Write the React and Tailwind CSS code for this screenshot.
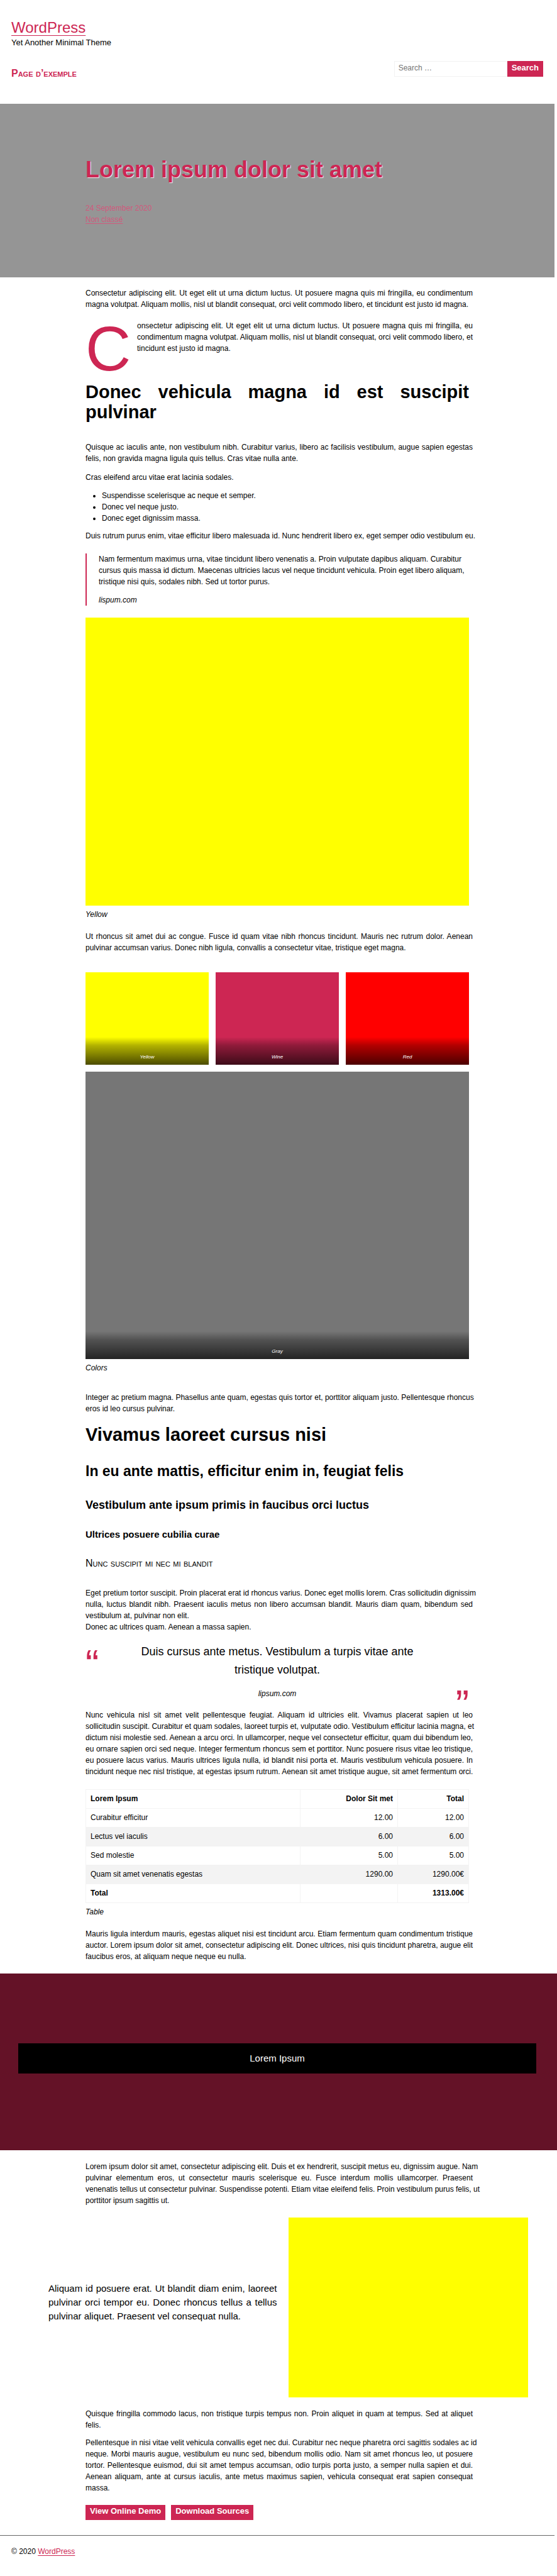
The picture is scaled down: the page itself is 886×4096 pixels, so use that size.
// Prose runs slightly past the figure column on the right.
const Para = ({ className = "", children }) => (
  <p className={`-mr-1.5 text-justify ${className}`}>{children}</p>
);

// Paragraph with fixed line breaks; every line but the last fills the column.
const Verse = ({ className = "", lines }) => (
  <p className={`-mr-1.5 ${className}`}>
    {lines.map((line) => (
      <span
        key={line}
        className="block text-justify whitespace-nowrap [text-align-last:justify] last:[text-align-last:left]"
      >
        {line}{" "}
      </span>
    ))}
  </p>
);

const Swatch = ({ color, label, className = "" }) => (
  <figure className={`flex aspect-4/3 flex-col justify-end ${color} ${className}`}>
    <figcaption className="h-11 bg-[linear-gradient(0deg,rgba(0,0,0,.7)_0%,rgba(0,0,0,.3)_70%,transparent_100%)] pt-[26px] text-center text-[8px] leading-3 text-white italic">
      {label}
    </figcaption>
  </figure>
);

const rows = [
  ["Curabitur efficitur", "12.00", "12.00"],
  ["Lectus vel iaculis", "6.00", "6.00"],
  ["Sed molestie", "5.00", "5.00"],
  ["Quam sit amet venenatis egestas", "1290.00", "1290.00€"],
];

const cell = "border border-[#f3f3f3] px-[7px] pt-[5px] pb-[6px]";
const button = "bg-[#cd2653] px-[7px] pt-0.5 pb-1.5 text-[13px] leading-4 font-bold text-white";

function Header() {
  return (
    <header className="px-[18px] pt-7">
      <div>
        <a href="#" className="text-[24px] leading-8 text-[#cd2653] underline decoration-1 underline-offset-4">
          WordPress
        </a>
      </div>
      <p className="text-[13px] leading-4">Yet Another Minimal Theme</p>
      <div className="mt-[21px] flex items-start justify-between">
        <nav className="pt-[11px]">
          <a href="#" className="block text-[16px] leading-[18px] font-bold text-[#cd2653] [font-variant:small-caps]">
            Page d’exemple
          </a>
        </nav>
        <form className="flex" onSubmit={(e) => e.preventDefault()}>
          <input
            type="search"
            aria-label="Search"
            placeholder="Search …"
            className="w-[180px] border border-[#f2f2f2] px-1.5 pb-0.5 text-[12px] leading-[21px] placeholder:text-[#757575]"
          />
          <button type="submit" className={button}>
            Search
          </button>
        </form>
      </div>
    </header>
  );
}

function Quote() {
  return (
    <figure className="mt-4 flex justify-between text-center">
      <span aria-hidden="true" className="w-6 text-left text-[64px] leading-[70px] text-[#cd2653]">
        “
      </span>
      <blockquote className="w-[450px]">
        <p className="text-[18px] leading-[29px]">
          Duis cursus ante metus. Vestibulum a turpis vitae ante tristique volutpat.
        </p>
        <cite className="mt-3.5 block">lipsum.com</cite>
      </blockquote>
      <span aria-hidden="true" className="-mb-3.5 flex w-6 justify-end self-end text-[64px] leading-[10px] text-[#cd2653]">
        ”
      </span>
    </figure>
  );
}

function PriceTable() {
  return (
    <figure className="mt-[19px]">
      <table className="w-full border-collapse text-right">
        <thead>
          <tr>
            <th className={`${cell} w-[341px] text-left`}>Lorem Ipsum</th>
            <th className={cell}>Dolor Sit met</th>
            <th className={`${cell} w-[113px]`}>Total</th>
          </tr>
        </thead>
        <tbody>
          {rows.map(([name, price, total]) => (
            <tr key={name} className="even:bg-[#f3f3f3]">
              <td className={`${cell} text-left`}>{name}</td>
              <td className={cell}>{price}</td>
              <td className={cell}>{total}</td>
            </tr>
          ))}
        </tbody>
        <tfoot>
          <tr className="font-bold">
            <td className={`${cell} text-left`}>Total</td>
            <td className={cell}></td>
            <td className={cell}>1313.00€</td>
          </tr>
        </tfoot>
      </table>
      <figcaption className="mt-[5px] italic">Table</figcaption>
    </figure>
  );
}

export default function App() {
  return (
    <div className="bg-white font-['Liberation_Sans',Arial,sans-serif] text-[12px] leading-[18px] text-black">
      <div className="mr-1">
        <Header />
        <div className="mt-[39px] bg-[#959595] py-20 text-[#cd2653]">
          <div className="mx-auto w-[610px]">
            <h1 className="text-[36px] leading-[50px] font-bold text-shadow-[1px_1px_1px_#f2f2f2]">
              Lorem ipsum dolor sit amet
            </h1>
            <div className="mt-[27px] pb-[3px] text-[#d05a7d]">
              <p>24 September 2020</p>
              <a href="#" className="underline underline-offset-2">
                Non classé
              </a>
            </div>
          </div>
        </div>

        <main className="mx-auto w-[610px] pt-4">
          <Para>
            Consectetur adipiscing elit. Ut eget elit ut urna dictum luctus. Ut posuere magna quis mi fringilla, eu
            condimentum magna volutpat. Aliquam mollis, nisl ut blandit consequat, orci velit commodo libero, et
            tincidunt est justo id magna.
          </Para>
          <div className="mt-4 flex pb-[13px]">
            <span className="w-[82px] pt-[5px] text-[100px] leading-[80px] text-[#cd2653]">C</span>
            <Verse
              className="min-w-0 flex-1"
              lines={[
                "onsectetur adipiscing elit. Ut eget elit ut urna dictum luctus. Ut posuere magna quis mi fringilla, eu",
                "condimentum magna volutpat. Aliquam mollis, nisl ut blandit consequat, orci velit commodo libero, et",
                "tincidunt est justo id magna.",
              ]}
            />
          </div>
          <h2 className="text-justify text-[29px] leading-8 font-bold">Donec vehicula magna id est suscipit pulvinar</h2>
          <Para className="mt-[31px]">
            Quisque ac iaculis ante, non vestibulum nibh. Curabitur varius, libero ac facilisis vestibulum, augue
            sapien egestas felis, non gravida magna ligula quis tellus. Cras vitae nulla ante.
          </Para>
          <Para className="mt-3">Cras eleifend arcu vitae erat lacinia sodales.</Para>
          <ul className="mt-[11px] list-disc pl-[26px]">
            <li>Suspendisse scelerisque ac neque et semper.</li>
            <li>Donec vel neque justo.</li>
            <li>Donec eget dignissim massa.</li>
          </ul>
          <Verse
            className="mt-2.5"
            lines={[
              "Duis rutrum purus enim, vitae efficitur libero malesuada id. Nunc hendrerit libero ex, eget semper odio vestibulum eu.",
            ]}
          />
          <blockquote className="mt-[19px] border-l-2 border-[#cd2653] pr-[18px] pl-[19px]">
            <Verse
              lines={[
                "Nam fermentum maximus urna, vitae tincidunt libero venenatis a. Proin vulputate dapibus aliquam. Curabitur",
                "cursus quis massa id dictum. Maecenas ultricies lacus vel neque tincidunt vehicula. Proin eget libero aliquam,",
                "tristique nisi quis, sodales nibh. Sed ut tortor purus.",
              ]}
            />
            <cite className="mt-[11px] block">lispum.com</cite>
          </blockquote>
          <figure className="mt-[19px]">
            <div className="aspect-4/3 bg-[#ffff00]" />
            <figcaption className="mt-[5px] italic">Yellow</figcaption>
          </figure>
          <Para className="mt-[17px]">
            Ut rhoncus sit amet dui ac congue. Fusce id quam vitae nibh rhoncus tincidunt. Mauris nec rutrum dolor.
            Aenean pulvinar accumsan varius. Donec nibh ligula, convallis a consectetur vitae, tristique eget magna.
          </Para>
          <figure className="mt-[30px]">
            <div className="grid grid-cols-3 gap-[11px]">
              <Swatch color="bg-[#ffff00]" label="Yellow" />
              <Swatch color="bg-[#cd2653]" label="Wine" />
              <Swatch color="bg-[#ff0000]" label="Red" />
              <Swatch color="bg-[#767676]" label="Gray" className="col-span-3" />
            </div>
            <figcaption className="mt-[5px] italic">Colors</figcaption>
          </figure>
          <Verse
            className="mt-[29px]"
            lines={[
              "Integer ac pretium magna. Phasellus ante quam, egestas quis tortor et, porttitor aliquam justo. Pellentesque rhoncus",
              "eros id leo cursus pulvinar.",
            ]}
          />
          <h2 className="mt-4 text-[29px] leading-8 font-bold">Vivamus laoreet cursus nisi</h2>
          <h3 className="mt-[29px] text-[23px] leading-[26px] font-bold">
            In eu ante mattis, efficitur enim in, feugiat felis
          </h3>
          <h4 className="mt-[31px] text-[18px] leading-5 font-bold">
            Vestibulum ante ipsum primis in faucibus orci luctus
          </h4>
          <h5 className="mt-7 text-[15px] leading-[18px] font-bold">Ultrices posuere cubilia curae</h5>
          <h6 className="mt-7 text-[16px] leading-[18px] [font-variant:small-caps]">Nunc suscipit mi nec mi blandit</h6>
          <Verse
            className="mt-[29px]"
            lines={[
              "Eget pretium tortor suscipit. Proin placerat erat id rhoncus varius. Donec eget mollis lorem. Cras sollicitudin dignissim",
              "nulla, luctus blandit nibh. Praesent iaculis metus non libero accumsan blandit. Mauris diam quam, bibendum sed",
              "vestibulum at, pulvinar non elit.",
            ]}
          />
          <p>Donec ac ultrices quam. Aenean a massa sapien.</p>
          <Quote />
          <Verse
            className="mt-4"
            lines={[
              "Nunc vehicula nisl sit amet velit pellentesque feugiat. Aliquam id ultricies elit. Vivamus placerat sapien ut leo",
              "sollicitudin suscipit. Curabitur et quam sodales, laoreet turpis et, vulputate odio. Vestibulum efficitur lacinia magna, et",
              "dictum nisi molestie sed. Aenean a arcu orci. In ullamcorper, neque vel consectetur efficitur, quam dui bibendum leo,",
              "eu ornare sapien orci sed neque. Integer fermentum rhoncus sem et porttitor. Nunc posuere risus vitae leo tristique,",
              "eu posuere lacus varius. Mauris ultrices ligula nulla, id blandit nisi porta et. Mauris vestibulum vehicula posuere. In",
              "tincidunt neque nec nisl tristique, at egestas ipsum rutrum. Aenean sit amet tristique augue, sit amet fermentum orci.",
            ]}
          />
          <PriceTable />
          <Verse
            className="mt-[17px]"
            lines={[
              "Mauris ligula interdum mauris, egestas aliquet nisi est tincidunt arcu. Etiam fermentum quam condimentum tristique",
              "auctor. Lorem ipsum dolor sit amet, consectetur adipiscing elit. Donec ultrices, nisi quis tincidunt pharetra, augue elit",
              "faucibus eros, at aliquam neque neque eu nulla.",
            ]}
          />
        </main>
      </div>

      <section className="mt-[18px] bg-[#641227] pt-[111px] pr-[33px] pb-[122px] pl-[29px]">
        <p className="bg-black py-3 text-center text-[15px] leading-6 text-white">Lorem Ipsum</p>
      </section>

      <div className="mr-1">
        <div className="mx-auto w-[610px] pt-[17px]">
          <Verse
            lines={[
              "Lorem ipsum dolor sit amet, consectetur adipiscing elit. Duis et ex hendrerit, suscipit metus eu, dignissim augue. Nam",
              "pulvinar elementum eros, ut consectetur mauris scelerisque eu. Fusce interdum mollis ullamcorper. Praesent",
              "venenatis tellus ut consectetur pulvinar. Suspendisse potenti. Etiam vitae eleifend felis. Proin vestibulum purus felis, ut",
              "porttitor ipsum sagittis ut.",
            ]}
          />
          <div className="mt-[18px] -mr-[94px] -ml-[59px] grid grid-cols-2 items-center">
            <p className="pr-[18px] pb-4 text-justify text-[15px] leading-[22px]">
              Aliquam id posuere erat. Ut blandit diam enim, laoreet pulvinar orci tempor eu. Donec rhoncus tellus a
              tellus pulvinar aliquet. Praesent vel consequat nulla.
            </p>
            <div className="aspect-4/3 bg-[#ffff00]" />
          </div>
          <Para className="mt-[17px]">
            Quisque fringilla commodo lacus, non tristique turpis tempus non. Proin aliquet in quam at tempus. Sed at
            aliquet felis.
          </Para>
          <Verse
            className="mt-2.5"
            lines={[
              "Pellentesque in nisi vitae velit vehicula convallis eget nec dui. Curabitur nec neque pharetra orci sagittis sodales ac id",
              "neque. Morbi mauris augue, vestibulum eu nunc sed, bibendum mollis odio. Nam sit amet rhoncus leo, ut posuere",
              "tortor. Pellentesque euismod, dui sit amet tempus accumsan, odio turpis porta justo, a semper nulla sapien et dui.",
              "Aenean aliquam, ante at cursus iaculis, ante metus maximus sapien, vehicula consequat erat sapien consequat",
              "massa.",
            ]}
          />
          <div className="mt-[18px] flex gap-[9px]">
            <button type="button" className={button}>
              View Online Demo
            </button>
            <button type="button" className={button}>
              Download Sources
            </button>
          </div>
        </div>
        <footer className="mt-6 border-t border-[#666666] px-[18px] pt-4 pb-[30px]">
          © 2020{" "}
          <a href="#" className="text-[#cd2653] underline underline-offset-2">
            WordPress
          </a>
        </footer>
      </div>
    </div>
  );
}
